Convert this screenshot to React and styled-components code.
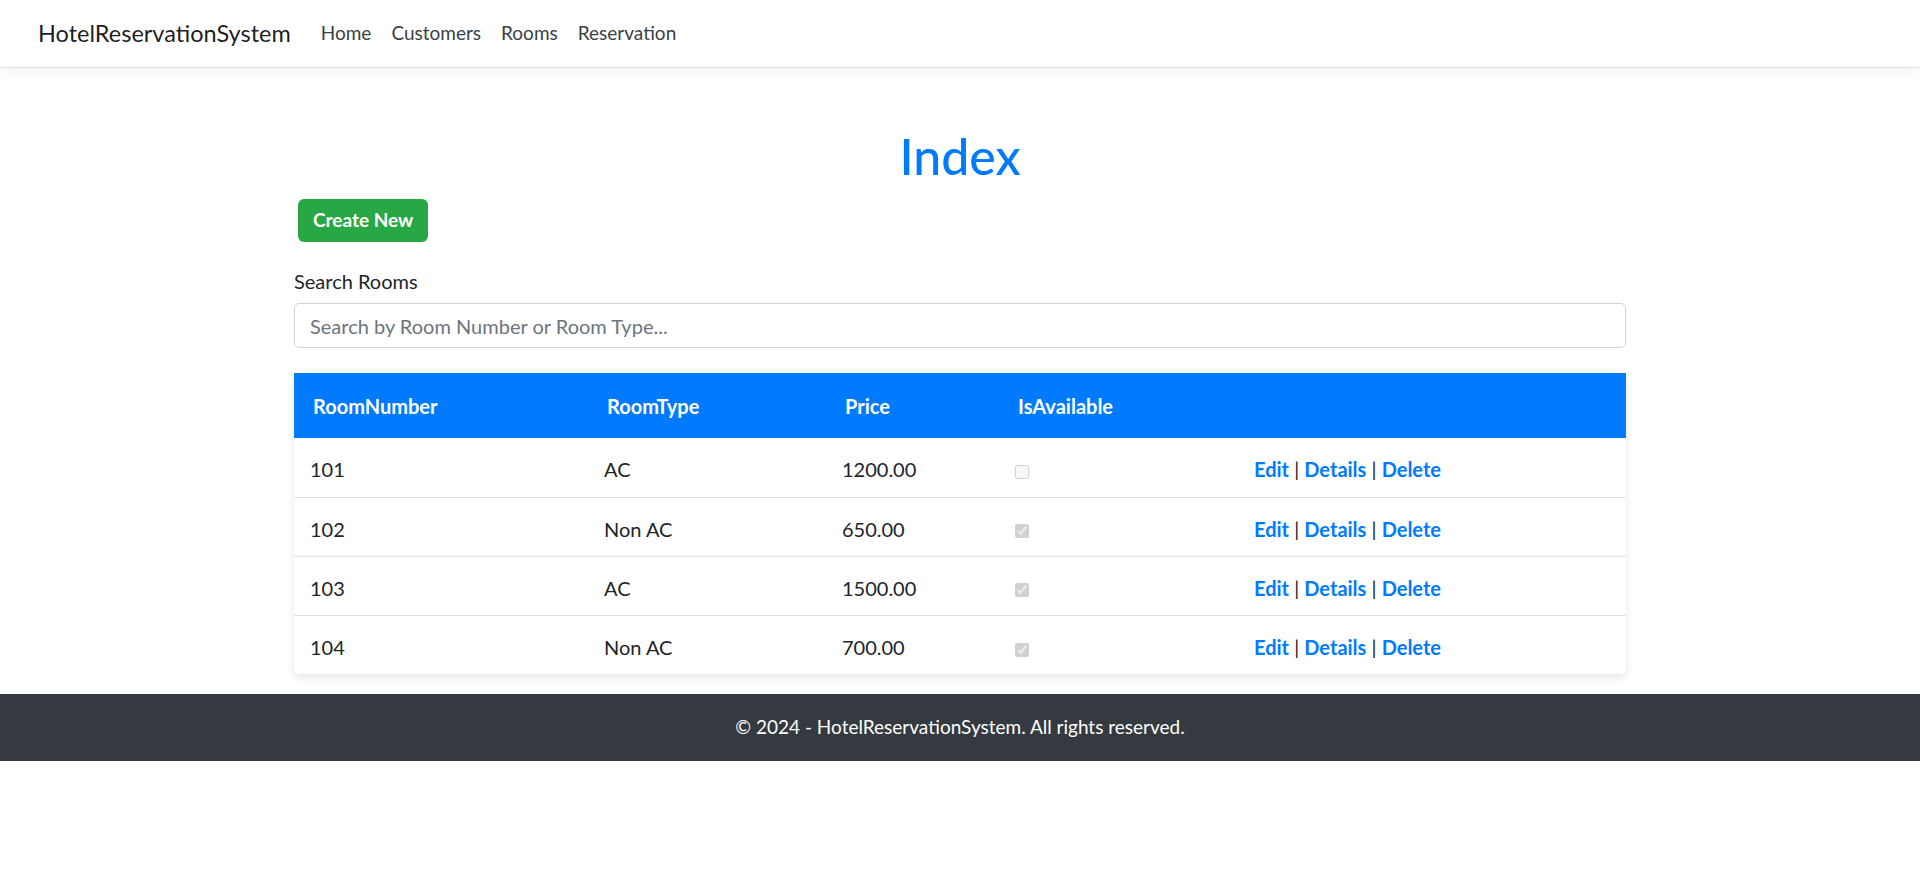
import React from "react";
import styled, { createGlobalStyle } from "styled-components";

const GlobalStyle = createGlobalStyle`
  body {
    margin: 0;
    background: #fff;
    color: #212529;
    font-family: Lato, "Open Sans", sans-serif;
    font-size: 20px;
    line-height: 1.5;
  }
`;

const rooms = [
  { number: "101", type: "AC", price: "1200.00", available: false },
  { number: "102", type: "Non AC", price: "650.00", available: true },
  { number: "103", type: "AC", price: "1500.00", available: true },
  { number: "104", type: "Non AC", price: "700.00", available: true },
];

const NavBar = styled.header`
  height: 67px;
  display: flex;
  align-items: center;
  padding: 0 38px;
  background: #fff;
  border-bottom: 1px solid #e3e3e3;
  box-shadow: 0 4px 12px rgba(0, 0, 0, 0.05);
`;

const Brand = styled.a`
  font-size: 23.5px;
  color: rgba(0, 0, 0, 0.9);
  margin-right: 20px;
  text-decoration: none;
`;

const NavLinks = styled.nav`
  display: flex;
`;

const NavLink = styled.a`
  padding: 0 10px;
  font-size: 19px;
  color: #3a3f44;
  text-decoration: none;
`;

const Main = styled.main`
  width: 1332px;
  margin: 0 auto;
  padding-top: 58px;
  padding-bottom: 20px;
`;

const Title = styled.h1`
  margin: 0;
  text-align: center;
  color: #007bff;
  font-size: 50px;
  font-weight: 500;
  line-height: 1.2;
`;

const CreateButton = styled.a`
  display: inline-flex;
  align-items: center;
  height: 43px;
  padding: 0 15px;
  margin: 13px 0 0 4px;
  box-sizing: border-box;
  background: #28a745;
  color: #fff;
  font-weight: 700;
  font-size: 19px;
  border-radius: 6px;
  text-decoration: none;
`;

const SearchBlock = styled.div`
  margin-top: 24px;
  margin-bottom: 25px;
`;

const Label = styled.label`
  display: block;
  margin-bottom: 7px;
`;

const SearchInput = styled.input`
  display: block;
  width: 100%;
  box-sizing: border-box;
  height: 45px;
  padding: 0 15px;
  font-family: inherit;
  font-size: 20px;
  color: #212529;
  border: 1px solid #ced4da;
  border-radius: 5px;
  outline: none;

  &::placeholder {
    color: #6c757d;
  }
`;

const TableCard = styled.div`
  border-radius: 6px;
  box-shadow: 0 4px 10px rgba(0, 0, 0, 0.1);
  background: #fff;
`;

const Table = styled.table`
  width: 100%;
  border-collapse: collapse;
`;

const HeadCell = styled.th`
  height: 65px;
  padding: 0 19px;
  background: #007bff;
  color: #fff;
  font-weight: 700;
  text-align: left;
`;

const Row = styled.tr`
  height: 59px;
  border-bottom: ${(p) => (p.$last ? "none" : "1px solid #dee2e6")};
`;

const Cell = styled.td`
  padding: 4px 16px 0;
  vertical-align: middle;
`;

const Check = styled.input`
  width: 14px;
  height: 14px;
  margin: 0;
  vertical-align: middle;
`;

const ActionLink = styled.a`
  color: #007bff;
  font-weight: 700;
  text-decoration: none;
`;

const Footer = styled.footer`
  height: 67px;
  display: flex;
  align-items: center;
  justify-content: center;
  background: #343a40;
  color: #fff;
  font-size: 19px;
`;

export default function App() {
  return (
    <>
      <GlobalStyle />
      <NavBar>
        <Brand href="#">HotelReservationSystem</Brand>
        <NavLinks>
          <NavLink href="#">Home</NavLink>
          <NavLink href="#">Customers</NavLink>
          <NavLink href="#">Rooms</NavLink>
          <NavLink href="#">Reservation</NavLink>
        </NavLinks>
      </NavBar>

      <Main>
        <Title>Index</Title>
        <CreateButton href="#">Create New</CreateButton>

        <SearchBlock>
          <Label htmlFor="search">Search Rooms</Label>
          <SearchInput
            id="search"
            type="text"
            placeholder="Search by Room Number or Room Type..."
          />
        </SearchBlock>

        <TableCard>
          <Table>
            <colgroup>
              <col style={{ width: 294 }} />
              <col style={{ width: 238 }} />
              <col style={{ width: 173 }} />
              <col style={{ width: 239 }} />
              <col />
            </colgroup>
            <thead>
              <tr>
                <HeadCell>RoomNumber</HeadCell>
                <HeadCell>RoomType</HeadCell>
                <HeadCell>Price</HeadCell>
                <HeadCell>IsAvailable</HeadCell>
                <HeadCell />
              </tr>
            </thead>
            <tbody>
              {rooms.map((room, i) => (
                <Row key={room.number} $last={i === rooms.length - 1}>
                  <Cell>{room.number}</Cell>
                  <Cell>{room.type}</Cell>
                  <Cell>{room.price}</Cell>
                  <Cell>
                    <Check type="checkbox" checked={room.available} disabled readOnly />
                  </Cell>
                  <Cell>
                    <ActionLink href="#">Edit</ActionLink> |{" "}
                    <ActionLink href="#">Details</ActionLink> |{" "}
                    <ActionLink href="#">Delete</ActionLink>
                  </Cell>
                </Row>
              ))}
            </tbody>
          </Table>
        </TableCard>
      </Main>

      <Footer>© 2024 - HotelReservationSystem. All rights reserved.</Footer>
    </>
  );
}
